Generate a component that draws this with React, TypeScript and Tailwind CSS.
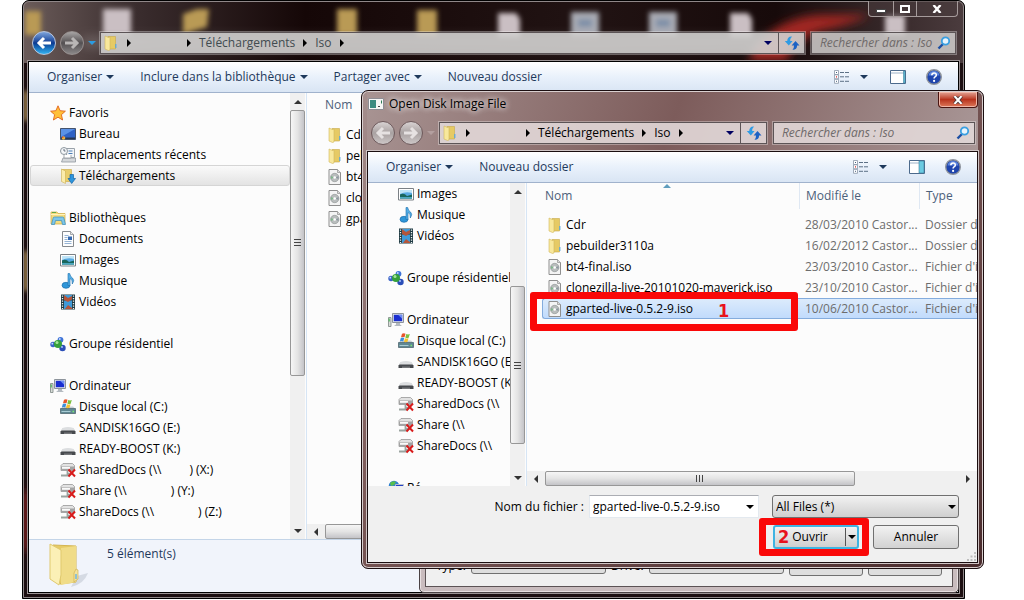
import React, { useState } from 'react';

type IconName =
  | 'star' | 'desktop' | 'recent' | 'downloads' | 'libraries' | 'document' | 'image' | 'music' | 'video'
  | 'homegroup' | 'computer' | 'disk' | 'usb' | 'netdrive' | 'network' | 'folder' | 'iso';

interface NavItem {
  label: string;
  icon: IconName;
  // mapped drives: host name is masked, only the letter follows
  suffix?: string;
  gap?: string;
}

interface NavGroup {
  header?: NavItem;
  items: NavItem[];
}

interface FileRow {
  name: string;
  icon: IconName;
  date: string;
  type: string;
}

const libraryItems: NavItem[] = [
  { label: 'Images', icon: 'image' },
  { label: 'Musique', icon: 'music' },
  { label: 'Vidéos', icon: 'video' },
];

const driveItems: NavItem[] = [
  { label: 'Disque local (C:)', icon: 'disk' },
  { label: 'SANDISK16GO (E:)', icon: 'usb' },
  { label: 'READY-BOOST (K:)', icon: 'usb' },
];

const explorerGroups: NavGroup[] = [
  {
    header: { label: 'Favoris', icon: 'star' },
    items: [
      { label: 'Bureau', icon: 'desktop' },
      { label: 'Emplacements récents', icon: 'recent' },
      { label: 'Téléchargements', icon: 'downloads' },
    ],
  },
  {
    header: { label: 'Bibliothèques', icon: 'libraries' },
    items: [{ label: 'Documents', icon: 'document' }, ...libraryItems],
  },
  { header: { label: 'Groupe résidentiel', icon: 'homegroup' }, items: [] },
  {
    header: { label: 'Ordinateur', icon: 'computer' },
    items: [
      ...driveItems,
      { label: 'SharedDocs (\\\\', icon: 'netdrive', gap: 'ml-7', suffix: ') (X:)' },
      { label: 'Share (\\\\', icon: 'netdrive', gap: 'ml-11', suffix: ') (Y:)' },
      { label: 'ShareDocs (\\\\', icon: 'netdrive', gap: 'ml-11', suffix: ') (Z:)' },
    ],
  },
];

const dialogGroups: NavGroup[] = [
  { items: libraryItems },
  { header: { label: 'Groupe résidentiel', icon: 'homegroup' }, items: [] },
  {
    header: { label: 'Ordinateur', icon: 'computer' },
    items: [
      ...driveItems,
      { label: 'SharedDocs (\\\\', icon: 'netdrive' },
      { label: 'Share (\\\\', icon: 'netdrive' },
      { label: 'ShareDocs (\\\\', icon: 'netdrive' },
    ],
  },
  { header: { label: 'Ré', icon: 'network' }, items: [] },
];

const files: FileRow[] = [
  { name: 'Cdr', icon: 'folder', date: '28/03/2010 Castor...', type: 'Dossier de fichiers' },
  { name: 'pebuilder3110a', icon: 'folder', date: '16/02/2012 Castor...', type: 'Dossier de fichiers' },
  { name: 'bt4-final.iso', icon: 'iso', date: '23/03/2010 Castor...', type: "Fichier d'image disque" },
  { name: 'clonezilla-live-20101020-maverick.iso', icon: 'iso', date: '23/10/2010 Castor...', type: "Fichier d'image disque" },
  { name: 'gparted-live-0.5.2-9.iso', icon: 'iso', date: '10/06/2010 Castor...', type: "Fichier d'image disque" },
];

const Drive = () => (
  <>
    <path d="M1 3.500L3 1.500h9.500L14.500 3.500V8.500H1z" fill="#e2e2e2" stroke="#8c8c8c" strokeWidth=".7" />
    <path d="M1 4.500h13.500v4H1z" fill="#a3a3a3" />
    <path d="M2 5h8v1.800H2z" fill="#fafafa" />
    <path d="M7.500 8.500V12H11M1 13.500h8" stroke="#9aa39f" strokeWidth="1.800" fill="none" />
  </>
);

const glyphs: Record<IconName, React.ReactNode> = {
  star: (
    <path
      d="M8 .8l2.1 4.9 5.3.5-4 3.5 1.2 5.3L8 12.2 3.4 15l1.2-5.3-4-3.5 5.3-.5z"
      fill="#ffc03a"
      stroke="#e2641c"
      strokeWidth=".9"
      strokeLinejoin="round"
    />
  ),
  desktop: (
    <>
      <path d="M.5 2.500h15v11H.5z" fill="#2f62c4" stroke="#44546e" />
      <path d="M1 3h14L1 11z" fill="#5b92e6" />
      <path d="M1 11.500h14V13H1z" fill="#27364f" />
      <circle cx="3.500" cy="12" r="1.800" fill="#f0b53a" />
      <circle cx="2.800" cy="11.300" r=".8" fill="#e0492c" />
    </>
  ),
  recent: (
    <>
      <path d="M6.500 1.500h8v9h-8z" fill="#f2f5f8" stroke="#9aa2aa" />
      <path d="M8.500 4h4M8.500 6.500h4" stroke="#4b7db5" />
      <path d="M3 11h12.500v4H1.500z" fill="#d5d8db" stroke="#8f979e" strokeWidth=".8" />
      <path d="M4 8v3h7V8" fill="#fff" stroke="#8f979e" strokeWidth=".8" />
      <circle cx="4" cy="4" r="3.500" fill="#f4f6f8" stroke="#8e979f" />
      <path d="M4 2v2h1.500" stroke="#45525f" strokeWidth=".8" fill="none" />
    </>
  ),
  downloads: (
    <>
      <path d="M2 1.500h9.500v12H5z" fill="#e9ce6b" stroke="#c9a742" strokeWidth=".6" />
      <path d="M1.500 1l4 2v12.500l-4-2z" fill="#fbecaa" stroke="#cdb050" strokeWidth=".6" />
      <path d="M10 6.500h3.500v4h2L11.700 15.500 8 10.500h2z" fill="#2e95dc" stroke="#1465a8" strokeWidth=".7" />
    </>
  ),
  libraries: (
    <>
      <path d="M1 2h6l1 1.500h7V14H1z" fill="#f4dc80" stroke="#cda93f" strokeWidth=".7" />
      <path d="M1 4.500h14" stroke="#fff3bd" />
      <path d="M2 2.500h4" stroke="#60a84a" />
      <path d="M3 8.500q0-1.500 1.500-1.500h8Q14 7 14 8.500l1.500 6h-3L11.500 10.500h-6l-1 4h-3z" fill="#7cc6ea" stroke="#3a8ebb" strokeWidth=".7" />
    </>
  ),
  document: (
    <>
      <path d="M2.500.5h8l3 3v12h-11z" fill="#fdfdfd" stroke="#85898e" />
      <path d="M10.500.5v3h3" fill="#e8e8e8" stroke="#85898e" strokeWidth=".7" />
      <path d="M4.500 4.500h4M4.500 10.500h7M4.500 12.500h7M4.500 6.500h3M4.500 8.500h3" stroke="#7aa0c9" strokeWidth=".8" />
      <path d="M8 5.500h4V9H8z" fill="#3368b0" />
    </>
  ),
  image: (
    <>
      <path d="M.5 2.500h15v11.500H.5z" fill="#fff" stroke="#7b8085" />
      <path d="M2 4h12v8.500H2z" fill="#57a9e2" />
      <path d="M2 4h12v3Q8 5 2 8z" fill="#bfe4f7" />
      <path d="M2 8.500q4-2 7 1.500l5-1.500v4H2z" fill="#19665c" />
      <path d="M2 11h12v1.500H2z" fill="#4aa7bf" />
    </>
  ),
  music: (
    <>
      <ellipse cx="6" cy="12.300" rx="4" ry="3" fill="#2f96d8" stroke="#1a6dab" strokeWidth=".7" />
      <path d="M8 12.500V.5h1.700q.3 3 2.800 4.500 2.500 2-.2 6 .6-4.500-2.300-5.500v7z" fill="#54aee6" stroke="#1a6dab" strokeWidth=".6" />
    </>
  ),
  video: (
    <>
      <path d="M1 .5h14v15H1z" fill="#1f3a42" />
      <path d="M4 1h8v4.500H4zM4 6.500h8v8.500H4z" fill="#3f9ad8" />
      <path d="M4 1l4 3 4-2v3.500L8 8 4 6zM5 15l3-4 4 3v1z" fill="#b5553a" />
      <path d="M2.500 1.500v13.500M13.500 1.500v13.500" stroke="#eef2f3" strokeWidth="1.300" strokeDasharray="1.200 1.300" />
    </>
  ),
  homegroup: (
    <>
      <circle cx="10.500" cy="3.800" r="2.900" fill="#3f74d8" />
      <circle cx="3" cy="8.500" r="2.700" fill="#3a63c9" />
      <circle cx="12.500" cy="12" r="3.200" fill="#2b4fb8" />
      <circle cx="8" cy="8" r="4" fill="#35a03b" />
      <circle cx="7" cy="6.500" r="1.500" fill="#a5e39a" />
      <circle cx="9.800" cy="3" r=".9" fill="#cadcff" />
      <circle cx="2.300" cy="7.700" r=".9" fill="#cadcff" />
      <circle cx="12" cy="11" r="1" fill="#a9c2fa" />
    </>
  ),
  computer: (
    <>
      <path d="M.5 5.500h2.500v9H.5z" fill="#d7dcd7" stroke="#7c8583" strokeWidth=".8" />
      <path d="M1.200 6.500v3" stroke="#3bb54a" />
      <path d="M4.500 1.500h11v9h-11z" fill="#dfe3e8" stroke="#8d949c" />
      <path d="M5.800 2.800h8.400v6.400H5.800z" fill="#1a2ed0" />
      <path d="M10 2.800h4.200v4z" fill="#6d8df2" />
      <path d="M8 11h4v1.500l2 1.500H6l2-1.500z" fill="#b4bac0" />
    </>
  ),
  disk: (
    <>
      <path d="M1 9.500l2-2h10l2 2z" fill="#c9d0d4" />
      <path d="M.5 9.500h15v5H.5z" fill="#5f8792" stroke="#455d66" strokeWidth=".7" />
      <path d="M1.500 12.500h9" stroke="#a9ccd4" />
      <path d="M12.500 12.500h1.500" stroke="#7bea72" strokeWidth="1.300" />
      <path d="M4 .8q2-1 3.500 0L6.500 4.300q-2-.8-3.500 0z" fill="#e8552b" />
      <path d="M8.300 1.100q1.700.9 3.500 0L10.700 4.800q-1.800.8-3.400-.2z" fill="#7cc142" />
      <path d="M2.800 5q1.700-.9 3.500 0L5.200 8.500q-1.800-.9-3.400 0z" fill="#3c8fdc" />
      <path d="M7 5.300q1.800.9 3.500 0L9.500 8.800q-2 .8-3.500 0z" fill="#f6c12e" />
    </>
  ),
  usb: (
    <>
      <path d="M3 8.500h10l2.500 3v2.500h-15v-2.500z" fill="#46494d" />
      <path d="M2.500 8q5.500-2 11 0l1.500 2.500H1z" fill="#dcdee0" />
      <path d="M4 12.500h8v1.500H4z" fill="#77797c" />
    </>
  ),
  netdrive: (
    <>
      <Drive />
      <path d="M8.500 7.500l6.500 7M15 7.500l-6.500 7" stroke="#d81b1b" strokeWidth="2" />
    </>
  ),
  network: (
    <>
      <circle cx="6" cy="6" r="5.300" fill="#2f80d0" />
      <path d="M2 3q3-3 6-1l-2 3-3 1z" fill="#57c04a" />
      <path d="M7.500 4.500h8V11h-8z" fill="#2440c8" stroke="#b9c0cc" />
    </>
  ),
  folder: (
    <>
      <path d="M5 1.500h7.500v12.500H5z" fill="#e6ca64" stroke="#c8a94a" strokeWidth=".6" />
      <path d="M2 1l3.500 1.500L7 2v13l-1.500.5L2 14z" fill="#f8e89c" stroke="#d2b75b" strokeWidth=".6" />
      <path d="M12.800 9v4" stroke="#5ba7db" strokeWidth="1.200" />
    </>
  ),
  iso: (
    <>
      <path d="M2 .5h8.500l3 3v12H2z" fill="#f4f4f4" stroke="#8f8f8f" />
      <path d="M10.500.5v3h3" fill="#dcdcdc" stroke="#8f8f8f" strokeWidth=".7" />
      <circle cx="7.700" cy="8.500" r="4.200" fill="#b9bdbd" stroke="#8a8e8e" strokeWidth=".6" />
      <path d="M4 7l3.200 1.500L4 10z" fill="#7fb58b" />
      <path d="M8.500 8.500l3-1.500v3z" fill="#8d97a0" />
      <circle cx="7.700" cy="8.500" r="1.300" fill="#fff" />
    </>
  ),
};

const Icon: React.FC<{ name: IconName }> = ({ name }) => (
  <svg viewBox="0 0 16 16" className="w-4 h-4 shrink-0" aria-hidden="true">
    {glyphs[name]}
  </svg>
);

// Small solid triangles used by menus, breadcrumbs and scrollbars
const Down: React.FC<{ className?: string }> = ({ className = 'text-[#1e395b]' }) => (
  <svg viewBox="0 0 8 4" className={`w-2 h-1 shrink-0 ${className}`} aria-hidden="true">
    <path d="M0 0h8L4 4z" fill="currentColor" />
  </svg>
);

const Side: React.FC<{ left?: boolean }> = ({ left }) => (
  <svg viewBox="0 0 4 8" className="w-1 h-2 shrink-0" aria-hidden="true">
    <path d={left ? 'M4 0v8L0 4z' : 'M0 0v8l4-4z'} fill="currentColor" />
  </svg>
);

const RoundArrow: React.FC<{ label: string; forward?: boolean; active?: boolean; light?: boolean }> = ({ label, forward, active, light }) => (
  <button
    aria-label={label}
    className={`w-6 h-6 shrink-0 rounded-full border flex items-center justify-center ${
      active
        ? 'border-[#b9c6dc] bg-linear-to-b from-[#7fa5dc] via-[#0d3a92] via-50% to-[#36b4f2]'
        : light
          ? 'border-[#6e5a5c] bg-linear-to-b from-[#d9d3d3] via-[#a9a2a2] via-50% to-[#cdc7c7]'
          : 'border-[#97908f] bg-linear-to-b from-[#a8a5a5] via-[#545052] via-50% to-[#8b8889]'
    }`}
  >
    <svg viewBox="0 0 16 16" className="w-4 h-4" aria-hidden="true">
      <path
        d={forward ? 'M1 8h11M8 3l5 5-5 5' : 'M15 8H4M8 3L3 8l5 5'}
        fill="none"
        stroke={active ? '#fff' : light ? '#e6e2e2' : '#b9b6b6'}
        strokeWidth="3"
      />
    </svg>
  </button>
);

const AddressRow: React.FC<{ light?: boolean; searchClass: string }> = ({ light, searchClass }) => (
  <div className="flex items-center h-[22px] pl-1 pr-[3px]">
    <div className="flex items-center gap-1">
      <RoundArrow label="Précédent" active={!light} light={light} />
      <RoundArrow label="Suivant" forward light={light} />
    </div>
    <div className="w-4 flex justify-center">
      <Down className={light ? 'text-[#b39f9f]' : 'text-[#2c9be0]'} />
    </div>
    <div
      className={`flex-1 min-w-0 h-full flex items-center border border-[#5c5456] shadow-[0_0_0_1px_#ffffff55] ${
        light ? 'bg-[#e2d8d8]/90 text-black' : 'bg-[#d2d0cf]/90 text-[#414b50]'
      }`}
    >
      <div className="ml-0.5 flex">
        <Icon name="folder" />
      </div>
      <div className="flex items-center ml-2 mr-auto whitespace-nowrap">
        <span className="text-black"><Side /></span>
        <span className="w-14" />
        <span className="text-black"><Side /></span>
        <span className="ml-2">Téléchargements</span>
        <span className="text-black ml-2"><Side /></span>
        <span className="ml-2">Iso</span>
        <span className="text-black ml-2"><Side /></span>
      </div>
      <button aria-label="Emplacements précédents" className="w-5 h-full flex items-center justify-center">
        <Down className="text-[#000060]" />
      </button>
      <button aria-label="Actualiser" className="w-[26px] h-full border-l border-[#5c5456] flex items-center justify-center">
        <svg viewBox="0 0 16 16" className="w-4 h-4" aria-hidden="true">
          <path d="M8 1.500Q3.500 1 3.200 6H.8l4 4.500L8.600 6H6.200Q6 3.500 8 1.500z" fill="#2f9be4" />
          <path d="M8.500 14.800q4.500.2 4.600-4.300h2.400L11.500 6 7.600 10.500H10q.2 2.500-1.500 4.300z" fill="#1d62c4" />
        </svg>
      </button>
    </div>
    <div
      className={`ml-1.5 h-full flex items-center border border-[#5c5456] shadow-[0_0_0_1px_#ffffff55] pl-2 pr-1 ${searchClass} ${
        light ? 'bg-[#e2d8d8]/90' : 'bg-[#d2d0cf]/85'
      }`}
    >
      <input
        type="text"
        aria-label="Rechercher"
        placeholder="Rechercher dans : Iso"
        className="flex-1 min-w-0 bg-transparent outline-none italic placeholder:text-[#6f6a6a]"
      />
      <svg viewBox="0 0 14 14" className="w-3.5 h-3.5 shrink-0" aria-hidden="true">
        <path d="M1.500 12.500L6 8" stroke="#1c4fa3" strokeWidth="2.400" />
        <circle cx="8.500" cy="5" r="3.700" fill="#e9f4fc" stroke="#3a9fe0" strokeWidth="1.800" />
      </svg>
    </div>
  </div>
);

const Toolbar: React.FC<{ items: { label: string; menu?: boolean }[]; paneOpen?: boolean }> = ({ items, paneOpen }) => (
  <div className="h-[31px] shrink-0 flex items-center pl-[18px] pr-4 border-b border-[#a0b2cc] bg-linear-to-b from-white via-[#e9f1fb] via-50% to-[#d9e5f4] text-[#1e395b]">
    <div className="flex items-center gap-[26px] whitespace-nowrap">
      {items.map((item) => (
        <button key={item.label} className="flex items-center gap-1">
          {item.label}
          {item.menu && <Down />}
        </button>
      ))}
    </div>
    <div className="ml-auto flex items-center">
      <button aria-label="Affichage" className="flex items-center gap-2.5">
        <svg viewBox="0 0 16 14" className="w-4 h-3.5" aria-hidden="true">
          <path d="M.5.500h4v4h-4zM.5 4.800h4v4h-4zM.5 9.300h4v4h-4z" fill="#fff" stroke="#8a97a8" strokeWidth=".8" />
          <path d="M2 2.500h1M2 11.300h1" stroke="#47607e" />
          <path d="M2 6.800h1" stroke="#d62222" strokeWidth="1.200" />
          <path d="M6 2.500h4M11 2.500h4M6 6.800h4M11 6.800h4M6 11.300h4M11 11.300h4" stroke="#5d7186" />
        </svg>
        <Down />
      </button>
      <button aria-label="Volet de visualisation" className="ml-[22px]">
        <svg viewBox="0 0 16 14" className="w-4 h-3.5 block" aria-hidden="true">
          <path d="M.5.500h15v13H.5z" fill="#fff" stroke="#4c6a8c" />
          <path d="M1 3h14" stroke="#9db2c8" />
          <path d={paneOpen ? 'M10 1h5v12h-5z' : 'M13.500 1H15v12h-1.500z'} fill="#6ccbe2" stroke="#3d7d9c" strokeWidth=".6" />
        </svg>
      </button>
      <button aria-label="Aide" className="ml-5">
        <svg viewBox="0 0 16 16" className="w-4 h-4 block" aria-hidden="true">
          <circle cx="8" cy="8" r="7.300" fill="#1f45ad" stroke="#8f949c" strokeWidth="1.400" />
          <path d="M2.500 6.500a5.600 5.600 0 0 1 11 0z" fill="#5f86dc" />
          <path d="M5.800 6.300Q5.900 4 8.100 4t2.200 2Q10.300 7.200 9 7.900 8.100 8.400 8.100 9.600" fill="none" stroke="#fff" strokeWidth="1.600" />
          <circle cx="8.100" cy="11.900" r="1.100" fill="#fff" />
        </svg>
      </button>
    </div>
  </div>
);

const NavRow: React.FC<{ item: NavItem; child?: boolean; selected?: boolean }> = ({ item, child, selected }) => (
  <button
    className={`flex items-center gap-[3px] w-full h-[21px] shrink-0 text-left whitespace-nowrap border rounded-[3px] ${child ? 'pl-[29px]' : 'pl-[19px]'} ${
      selected ? 'border-[#d5d5d5] bg-linear-to-b from-[#fafafa] to-[#e3e3e3]' : 'border-transparent'
    }`}
  >
    <Icon name={item.icon} />
    <span>
      {item.label}
      {item.suffix && <span className={item.gap}>{item.suffix}</span>}
    </span>
  </button>
);

const NavPane: React.FC<{ groups: NavGroup[]; selected?: string; className: string }> = ({ groups, selected, className }) => (
  <nav className={`flex flex-col gap-[21px] overflow-hidden bg-[#fcfcfc] ${className}`}>
    {groups.map((group, i) => (
      <div key={i} className="flex flex-col shrink-0">
        {group.header && <NavRow item={group.header} />}
        {group.items.map((item) => (
          <NavRow key={item.label} item={item} child selected={item.label === selected} />
        ))}
      </div>
    ))}
  </nav>
);

const VScroll: React.FC<{ before: string; thumb: string; after: string }> = ({ before, thumb, after }) => (
  <div className="w-[15px] shrink-0 flex flex-col bg-[#f0f0f0] text-[#333]">
    <button aria-label="Défiler vers le haut" className="h-[17px] shrink-0 flex items-center justify-center">
      <span className="rotate-180 flex"><Down className="text-[#333]" /></span>
    </button>
    <div className={before} />
    <div className={`border border-[#979797] rounded-[2px] bg-linear-to-r from-[#f6f6f6] via-[#e4e4e4] via-50% to-[#c4c4c8] flex flex-col items-center justify-center gap-0.5 ${thumb}`}>
      <span className="w-[7px] h-px bg-[#444]" />
      <span className="w-[7px] h-px bg-[#444]" />
      <span className="w-[7px] h-px bg-[#444]" />
    </div>
    <div className={after} />
    <button aria-label="Défiler vers le bas" className="h-[17px] shrink-0 flex items-center justify-center">
      <Down className="text-[#333]" />
    </button>
  </div>
);

const HScroll: React.FC<{ thumb: string; after: string }> = ({ thumb, after }) => (
  <div className="h-[15px] shrink-0 flex bg-[#f0f0f0] text-[#333]">
    <button aria-label="Défiler vers la gauche" className="w-[18px] shrink-0 flex items-center justify-center"><Side left /></button>
    <div className={`border border-[#979797] rounded-[2px] bg-linear-to-b from-[#f6f6f6] via-[#e4e4e4] via-50% to-[#c4c4c8] flex items-center justify-center gap-0.5 ${thumb}`}>
      <span className="h-[7px] w-px bg-[#444]" />
      <span className="h-[7px] w-px bg-[#444]" />
      <span className="h-[7px] w-px bg-[#444]" />
    </div>
    <div className={after} />
    <button aria-label="Défiler vers la droite" className="w-[18px] shrink-0 flex items-center justify-center"><Side /></button>
  </div>
);

// Desktop icons seen blurred through the glass title bar
const Wallpaper = () => (
  <svg className="absolute inset-0 w-full h-full" aria-hidden="true">
    <defs>
      <filter id="soft" x="-30%" y="-30%" width="160%" height="160%"><feGaussianBlur stdDeviation="2.500" /></filter>
      <filter id="softer" x="-30%" y="-60%" width="160%" height="220%"><feGaussianBlur stdDeviation="5" /></filter>
      <linearGradient id="night" x1="0" x2="1">
        <stop offset="0" stopColor="#6b5c5a" />
        <stop offset=".12" stopColor="#3a2d2e" />
        <stop offset=".3" stopColor="#150707" />
        <stop offset=".6" stopColor="#211313" />
        <stop offset=".8" stopColor="#170a0a" />
        <stop offset="1" stopColor="#4b3c3e" />
      </linearGradient>
    </defs>
    <rect width="100%" height="62" fill="url(#night)" />
    <rect y="62" width="100%" height="100%" fill="#1c0f11" />
    <g filter="url(#softer)" fill="#a02822">
      <path d="M725 60q20-42 70-46h52q-20 10-50 16-24 8-34 30z" />
      <path d="M0 490h6v60H0z" />
      <path d="M60 34h700v14H60z" fill="#ffffff22" />
    </g>
    <g filter="url(#soft)">
      <path d="M2 10h16v24H2zM314 8h20v26h-20zM394 9h20v26h-20zM160 13l14-5h12l-2 18-24 7z" fill="#b99a55" />
      <path d="M80 8h28v26H80zM475 12h18l4 6v18h-22zM707 12h18l4 6v18h-22zM862 14h20v20h-20z" fill="#cabfc3" />
      <path d="M548 11h28v24h-28zM626 11h28v24h-28z" fill="#a9abb4" />
      <path d="M555 18h14v8h-14zM633 18h14v8h-14z" fill="#8091a8" />
      <path d="M0 250h6v40H0zM0 90h6v30H0z" fill="#95794a" />
    </g>
  </svg>
);

const ExplorerWindow = () => (
  <section className="absolute left-[22px] right-[59px] top-0 bottom-px flex flex-col overflow-hidden rounded-t-[7px] border border-black px-[5px] pb-[5px] bg-[#1c0f11]">
    <Wallpaper />
    <div className="absolute inset-0 rounded-t-[6px] border border-[#8f8788]" />
    <header className="relative h-[60px] shrink-0">
      <div className="h-[31px] flex justify-end items-start pr-px">
        <div className="flex h-4 border border-t-0 border-[#a59b9b] rounded-b-[4px] overflow-hidden bg-[#4a3c3e]/60">
          <button aria-label="Réduire" className="w-6 flex items-center justify-center">
            <span className="w-2.5 h-1 mt-1 bg-white border border-[#444]" />
          </button>
          <button aria-label="Agrandir" className="w-6 border-x border-[#a59b9b] flex items-center justify-center">
            <span className="w-2.5 h-2 border-2 border-white" />
          </button>
          <button aria-label="Fermer" className="w-10 flex items-center justify-center">
            <svg viewBox="0 0 10 8" className="w-2.5 h-2" aria-hidden="true">
              <path d="M1.500 0l7 8M8.500 0l-7 8" stroke="#fff" strokeWidth="2.400" />
            </svg>
          </button>
        </div>
      </div>
      <AddressRow searchClass="w-[145px]" />
    </header>
    <div className="relative flex-1 min-h-0 flex flex-col border border-black shadow-[0_0_0_1px_#9b9394] bg-[#fcfcfc]">
      <Toolbar
        items={[
          { label: 'Organiser', menu: true },
          { label: 'Inclure dans la bibliothèque', menu: true },
          { label: 'Partager avec', menu: true },
          { label: 'Nouveau dossier' },
        ]}
      />
      <div className="flex-1 min-h-0 flex">
        <NavPane groups={explorerGroups} selected="Téléchargements" className="w-[261px] shrink-0 pt-[9px] pl-px" />
        <VScroll before="" thumb="flex-[265]" after="flex-[147]" />
        <div className="w-0.5 shrink-0 bg-[#fcfcfc] border-r border-[#d6e5f5]" />
        <div className="flex-1 min-w-0 flex flex-col">
          <div className="flex-1 min-h-0 overflow-hidden pl-[18px]">
            <div className="h-[31px] pt-1 text-[#4c607a]">Nom</div>
            <ul className="pl-0.5">
              {files.map((file) => (
                <li key={file.name} className="h-[21px] flex items-center gap-[3px] whitespace-nowrap">
                  <Icon name={file.icon} />
                  {file.name}
                </li>
              ))}
            </ul>
          </div>
          <HScroll thumb="flex-[500]" after="flex-[100]" />
        </div>
      </div>
      <footer className="h-[53px] shrink-0 flex items-start pl-4 bg-[#f1f4fb] border-t border-[#c4d5e8] text-[#1e395b]">
        <svg viewBox="0 0 46 50" className="w-[46px] h-[50px]" aria-hidden="true">
          <path d="M32 36l11-3q-4 11-17 14z" fill="#c9ced8" opacity=".7" />
          <path d="M8 5l23 1v36l-16 2z" fill="#e6cb66" stroke="#d4b552" />
          <path d="M16 8l15-2v36l-15 3z" fill="#f0dc88" />
          <path d="M5 4l11 6v25l-2 10-9-6z" fill="#fbf0b6" stroke="#e0c96e" />
          <path d="M31 29l2 1v9l-4 3v-9z" fill="#f4e49c" stroke="#d0b255" strokeWidth=".7" />
          <path d="M31 34v5" stroke="#6fb6e2" strokeWidth="1.500" />
        </svg>
        <span className="ml-4 mt-1.5">5 élément(s)</span>
      </footer>
    </div>
  </section>
);

// Parent dialog, mostly hidden behind the file picker
const ImageOptionsDialog = () => (
  <section className="absolute left-[419px] right-[65px] top-[510px] bottom-[7px] rounded-[5px] border border-[#4a4143] bg-[#c9bcbe] shadow-[inset_0_0_0_1px_#e8e0e1] px-[5px] pb-[5px] pt-[5px] flex flex-col">
    <div className="flex-1 border border-[#5c5355] bg-[#f0f0f0] flex items-end justify-between pl-2.5 pr-2.5 pb-2.5">
      <span className="mb-0.5">Type:</span>
      <span className="w-[135px] h-[22px] mb-0.5 rounded-[3px] border border-[#707070] bg-[#dedede]" />
      <span className="mb-0.5">Drive:</span>
      <span className="w-[135px] h-[22px] mb-0.5 rounded-[3px] border border-[#707070] bg-[#dedede]" />
      <button className="w-[74px] h-6 rounded-[3px] border border-[#707070] bg-[#dedede]">OK</button>
      <button className="w-[74px] h-6 rounded-[3px] border border-[#707070] bg-[#dedede]">Cancel</button>
    </div>
  </section>
);

const OpenFileDialog = () => {
  const [selected, setSelected] = useState('gparted-live-0.5.2-9.iso');

  return (
    <section className="absolute left-[361px] right-10 top-[90px] bottom-[31px] flex flex-col rounded-[7px] border border-[#1b0e10] px-[5px] pb-[5px] bg-linear-to-br from-[#a58f8e] via-[#7d5b5a] via-40% to-[#4a2c2d] shadow-[inset_0_0_0_1px_#d9cfcf]">
      <header className="h-[60px] shrink-0 bg-linear-110 from-[#a89493] via-[#7d5c5b] via-50% to-[#a99797] mt-px -mb-px">
        <div className="h-[30px] flex items-start">
          <h1 className="flex items-center gap-[5px] h-6 ml-px">
            <svg viewBox="0 0 16 14" className="w-4 h-3.5" aria-hidden="true">
              <path d="M.5 1.500h15v11H.5z" fill="#f5f5f5" stroke="#8d8d94" />
              <path d="M2 3h6v8H2z" fill="#3b8a80" />
              <path d="M10 9.500h2" stroke="#444" />
              <path d="M13.500 3.500v3" stroke="#2d7a55" />
            </svg>
            <span className="[text-shadow:0_0_6px_#fff,0_0_6px_#ffffffaa]">Open Disk Image File</span>
          </h1>
          <button
            aria-label="Fermer"
            className="ml-auto w-10 h-4 rounded-b-[4px] border border-t-0 border-[#4a1410] shadow-[inset_0_0_0_1px_#f0b5a6] bg-linear-to-b from-[#e2a294] via-[#b8321c] via-50% to-[#dd7759] flex items-center justify-center"
          >
            <svg viewBox="0 0 10 8" className="w-2.5 h-2" aria-hidden="true">
              <path d="M1.500 0l7 8M8.500 0l-7 8" stroke="#4b3a3c" strokeWidth="3.600" />
              <path d="M1.500 0l7 8M8.500 0l-7 8" stroke="#fff" strokeWidth="2" />
            </svg>
          </button>
        </div>
        <AddressRow light searchClass="w-[202px]" />
      </header>
      <div className="relative flex-1 min-h-0 flex flex-col border border-[#1b0e10] shadow-[0_0_0_1px_#cfc4c4] bg-[#f0f0f0]">
        <Toolbar items={[{ label: 'Organiser', menu: true }, { label: 'Nouveau dossier' }]} paneOpen />
        <div className="flex-1 min-h-0 flex bg-[#fcfcfc]">
          <NavPane groups={dialogGroups} className="w-[142px] shrink-0" />
          <VScroll before="flex-[87]" thumb="flex-[157]" after="flex-[25]" />
          <div className="w-0.5 shrink-0 border-r border-[#d6e5f5]" />
          <div className="flex-1 min-w-0 flex flex-col">
            <div className="flex-1 min-h-0 overflow-hidden relative">
              <table className="table-fixed w-[600px] border-separate border-spacing-0 text-left whitespace-nowrap">
                <colgroup>
                  <col className="w-[272px]" />
                  <col className="w-[120px]" />
                  <col />
                </colgroup>
                <thead className="text-[#4c607a]">
                  <tr className="h-[31px] align-top">
                    <th className="font-normal p-0">
                      <button className="relative h-[26px] w-full pl-[18px] text-left">
                        Nom
                        <svg viewBox="0 0 8 4" className="absolute top-px left-1/2 w-2 h-1" aria-hidden="true">
                          <path d="M0 4h8L4 0z" fill="#5f9dbd" />
                        </svg>
                      </button>
                    </th>
                    <th className="font-normal p-0">
                      <div className="h-[26px] border-l border-[#dfe8f3] pl-1.5 flex items-center">Modifié le</div>
                    </th>
                    <th className="font-normal p-0">
                      <div className="h-[26px] border-l border-[#dfe8f3] pl-1.5 flex items-center">Type</div>
                    </th>
                  </tr>
                </thead>
                <tbody>
                  {files.map((file) => {
                    const on = file.name === selected;
                    const fill = on
                      ? 'border-y border-[#84acdd] bg-linear-to-b from-[#dcebfc] to-[#c1dbfc]'
                      : 'border-y border-transparent';
                    return (
                      <tr key={file.name} onClick={() => setSelected(file.name)}>
                        <td className="p-0 pl-[15px]">
                          <div className={`h-[21px] flex items-center gap-[3px] pl-1 rounded-l-[3px] border-l ${fill}`}>
                            <Icon name={file.icon} />
                            {file.name}
                          </div>
                        </td>
                        <td className="p-0 text-[#6d6d6d]">
                          <div className={`h-[21px] flex items-center pl-1.5 ${fill}`}>{file.date}</div>
                        </td>
                        <td className="p-0 text-[#6d6d6d]">
                          <div className={`h-[21px] flex items-center pl-1.5 ${fill}`}>{file.type}</div>
                        </td>
                      </tr>
                    );
                  })}
                </tbody>
              </table>
            </div>
            <HScroll thumb="flex-[309]" after="flex-[105]" />
          </div>
        </div>
        <footer className="relative h-[76px] shrink-0 flex flex-col items-end gap-[7px] pt-[9px] pr-[18px]">
          <div className="flex items-center">
            <label htmlFor="filename" className="mr-[5px]">Nom du fichier :</label>
            <div className="w-[170px] h-[23px] flex items-center bg-white border border-[#e3e9ef] border-t-[#abadb3] pl-[3px] pr-1">
              <input
                id="filename"
                type="text"
                value={selected}
                onChange={(e) => setSelected(e.target.value)}
                className="flex-1 min-w-0 bg-transparent outline-none"
              />
              <Down className="text-black" />
            </div>
            <div className="relative ml-[13px]">
              <select
                aria-label="Type de fichier"
                className="appearance-none block w-[187px] h-[23px] pl-[3px] rounded-[3px] border border-[#707070] bg-linear-to-b from-[#f2f2f2] to-[#cfcfcf]"
              >
                <option>All Files (*)</option>
              </select>
              <span className="absolute right-[3px] top-[10px] pointer-events-none"><Down className="text-black block" /></span>
            </div>
          </div>
          <div className="flex gap-3.5">
            <button className="w-[86px] h-6 rounded-[3px] border-2 border-[#3fb4e2] bg-linear-to-b from-[#f2f2f2] to-[#cfcfcf] flex items-center">
              <span className="flex-1 text-center">Ouvrir</span>
              <span className="h-[18px] w-3 border-l border-[#555] flex items-center justify-center"><Down className="text-black" /></span>
            </button>
            <button className="w-[86px] h-6 rounded-[3px] border border-[#707070] bg-linear-to-b from-[#f2f2f2] to-[#d2d2d2]">Annuler</button>
          </div>
          <svg viewBox="0 0 9 9" className="absolute right-px bottom-px w-[9px] h-[9px]" aria-hidden="true">
            <path d="M7 0h2v2H7zM7 3.500h2v2H7zM3.500 3.500h2v2h-2zM7 7h2v2H7zM3.500 7h2v2h-2zM0 7h2v2H0z" fill="#bdbdbd" />
          </svg>
        </footer>
      </div>
    </section>
  );
};

function App() {
  return (
    <main className="relative h-screen overflow-hidden bg-white text-black text-[12px] leading-4 font-['Open_Sans','Noto_Sans',sans-serif]">
      <ExplorerWindow />
      <ImageOptionsDialog />
      <OpenFileDialog />

      {/* Step markers */}
      <div className="absolute left-[530px] top-[292px] w-[268px] h-[39px] rounded-[3px] border-[7px] border-[#fa0808] pointer-events-none">
        <span className="absolute left-[181px] top-0.5 text-lg leading-5 font-['DejaVu_Sans_Condensed','DejaVu_Sans',sans-serif] font-bold text-[#e8121c]">1</span>
      </div>
      <div className="absolute right-[155px] bottom-11 w-[110px] h-[38px] rounded-[3px] border-[7px] border-[#fa0808] pointer-events-none">
        <span className="absolute left-3 top-0.5 text-lg leading-5 font-['DejaVu_Sans_Condensed','DejaVu_Sans',sans-serif] font-bold text-[#e8121c]">2</span>
      </div>
    </main>
  );
}

export default App;
